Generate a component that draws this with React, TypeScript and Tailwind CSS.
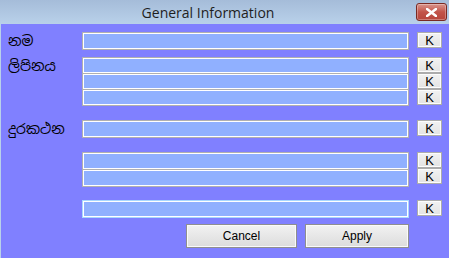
import React from 'react';

const sinhala = "font-['Iskoola_Pota','Noto_Sans_Sinhala','Noto_Sans',sans-serif]";

const Box: React.FC<{ focused?: boolean; h?: string }> = ({ focused, h = 'h-[18px]' }) => (
  <div
    className={`${h} w-[327px] border bg-[#90b0ff] shadow-[inset_0_0_0_1px_#ffffff] ${
      focused ? 'border-[#a8d8ff]' : 'border-[#b0b0b0]'
    }`}
  />
);

const KButton: React.FC = () => (
  <button className="flex h-[16px] w-[25px] items-center justify-center border border-[#acacac] bg-gradient-to-b from-[#f2f2f2] to-[#e3e3e3] font-['Liberation_Sans',sans-serif] text-[13px] leading-none text-black shadow-[inset_0_0_0_1px_#fcfcfc]">
    K
  </button>
);

const Label: React.FC<{ text?: string }> = ({ text }) => (
  <div className={`w-[81px] pl-[7px] pt-[1px] text-[14px] leading-[17px] text-black ${sinhala}`}>{text}</div>
);

const Row: React.FC<{ label?: string; focused?: boolean; className?: string }> = ({
  label,
  focused,
  className = '',
}) => (
  <div className={`flex items-start ${className}`}>
    <Label text={label} />
    <Box focused={focused} />
    <div className="ml-[8px]">
      <KButton />
    </div>
  </div>
);

export default function App() {
  return (
    <div className="h-[258px] w-[449px] overflow-hidden bg-[#b9d1ea]">
      {/* title bar */}
      <div className="relative flex h-[24px] items-center justify-center bg-gradient-to-b from-[#a5bcd9] to-[#b9d1ea] pr-[33px]">
        <span className="font-['Open_Sans',sans-serif] text-[14px] text-[#1e1e1e]">General Information</span>
        <div className="absolute right-[2px] top-[3px] flex h-[18px] w-[31px] items-center justify-center rounded-[3px] border border-[#7a2a22] bg-gradient-to-b from-[#d9958d] via-[#c2544a] to-[#b7463c] shadow-[inset_0_0_0_1px_rgba(255,255,255,0.3)]">
          <svg width="11" height="9" viewBox="0 0 11 9">
            <path d="M1 1 L10 8 M10 1 L1 8" stroke="#ffffff" strokeWidth="2.6" strokeLinecap="square" />
          </svg>
        </div>
      </div>

      {/* body */}
      <div className="ml-[1px] h-[234px] bg-[#8080ff] pt-[8px]">
        <Row label="නම" />

        <div className="mt-[7px] flex items-start">
          <Label text="ලිපිනය" />
          <div className="flex flex-col">
            <Box h="h-[17px]" />
            <div className="-mt-[1px]"><Box h="h-[17px]" /></div>
            <div className="-mt-[1px]"><Box h="h-[17px]" /></div>
          </div>
          <div className="ml-[8px] flex flex-col">
            <KButton />
            <KButton />
            <KButton />
          </div>
        </div>

        <Row label="දුරකථන" className="mt-[14px]" />

        <div className="mt-[14px] flex items-start">
          <Label />
          <div className="flex flex-col">
            <Box h="h-[18px]" />
            <div className="-mt-[1px]"><Box h="h-[18px]" /></div>
          </div>
          <div className="ml-[8px] flex flex-col">
            <KButton />
            <KButton />
          </div>
        </div>

        <Row className="mt-[13px]" focused />

        <div className="mt-[6px] flex pl-[185px]">
          <button className="h-[24px] w-[111px] border border-[#8f8f8f] bg-gradient-to-b from-[#f2f2f2] to-[#dcdcdc] font-['Liberation_Sans',sans-serif] text-[12px] text-black shadow-[inset_0_0_0_1px_#fafafa]">
            Cancel
          </button>
          <button className="ml-[8px] h-[24px] w-[104px] border border-[#8f8f8f] bg-gradient-to-b from-[#f2f2f2] to-[#dcdcdc] font-['Liberation_Sans',sans-serif] text-[12px] text-black shadow-[inset_0_0_0_1px_#fafafa]">
            Apply
          </button>
        </div>
      </div>
    </div>
  );
}
